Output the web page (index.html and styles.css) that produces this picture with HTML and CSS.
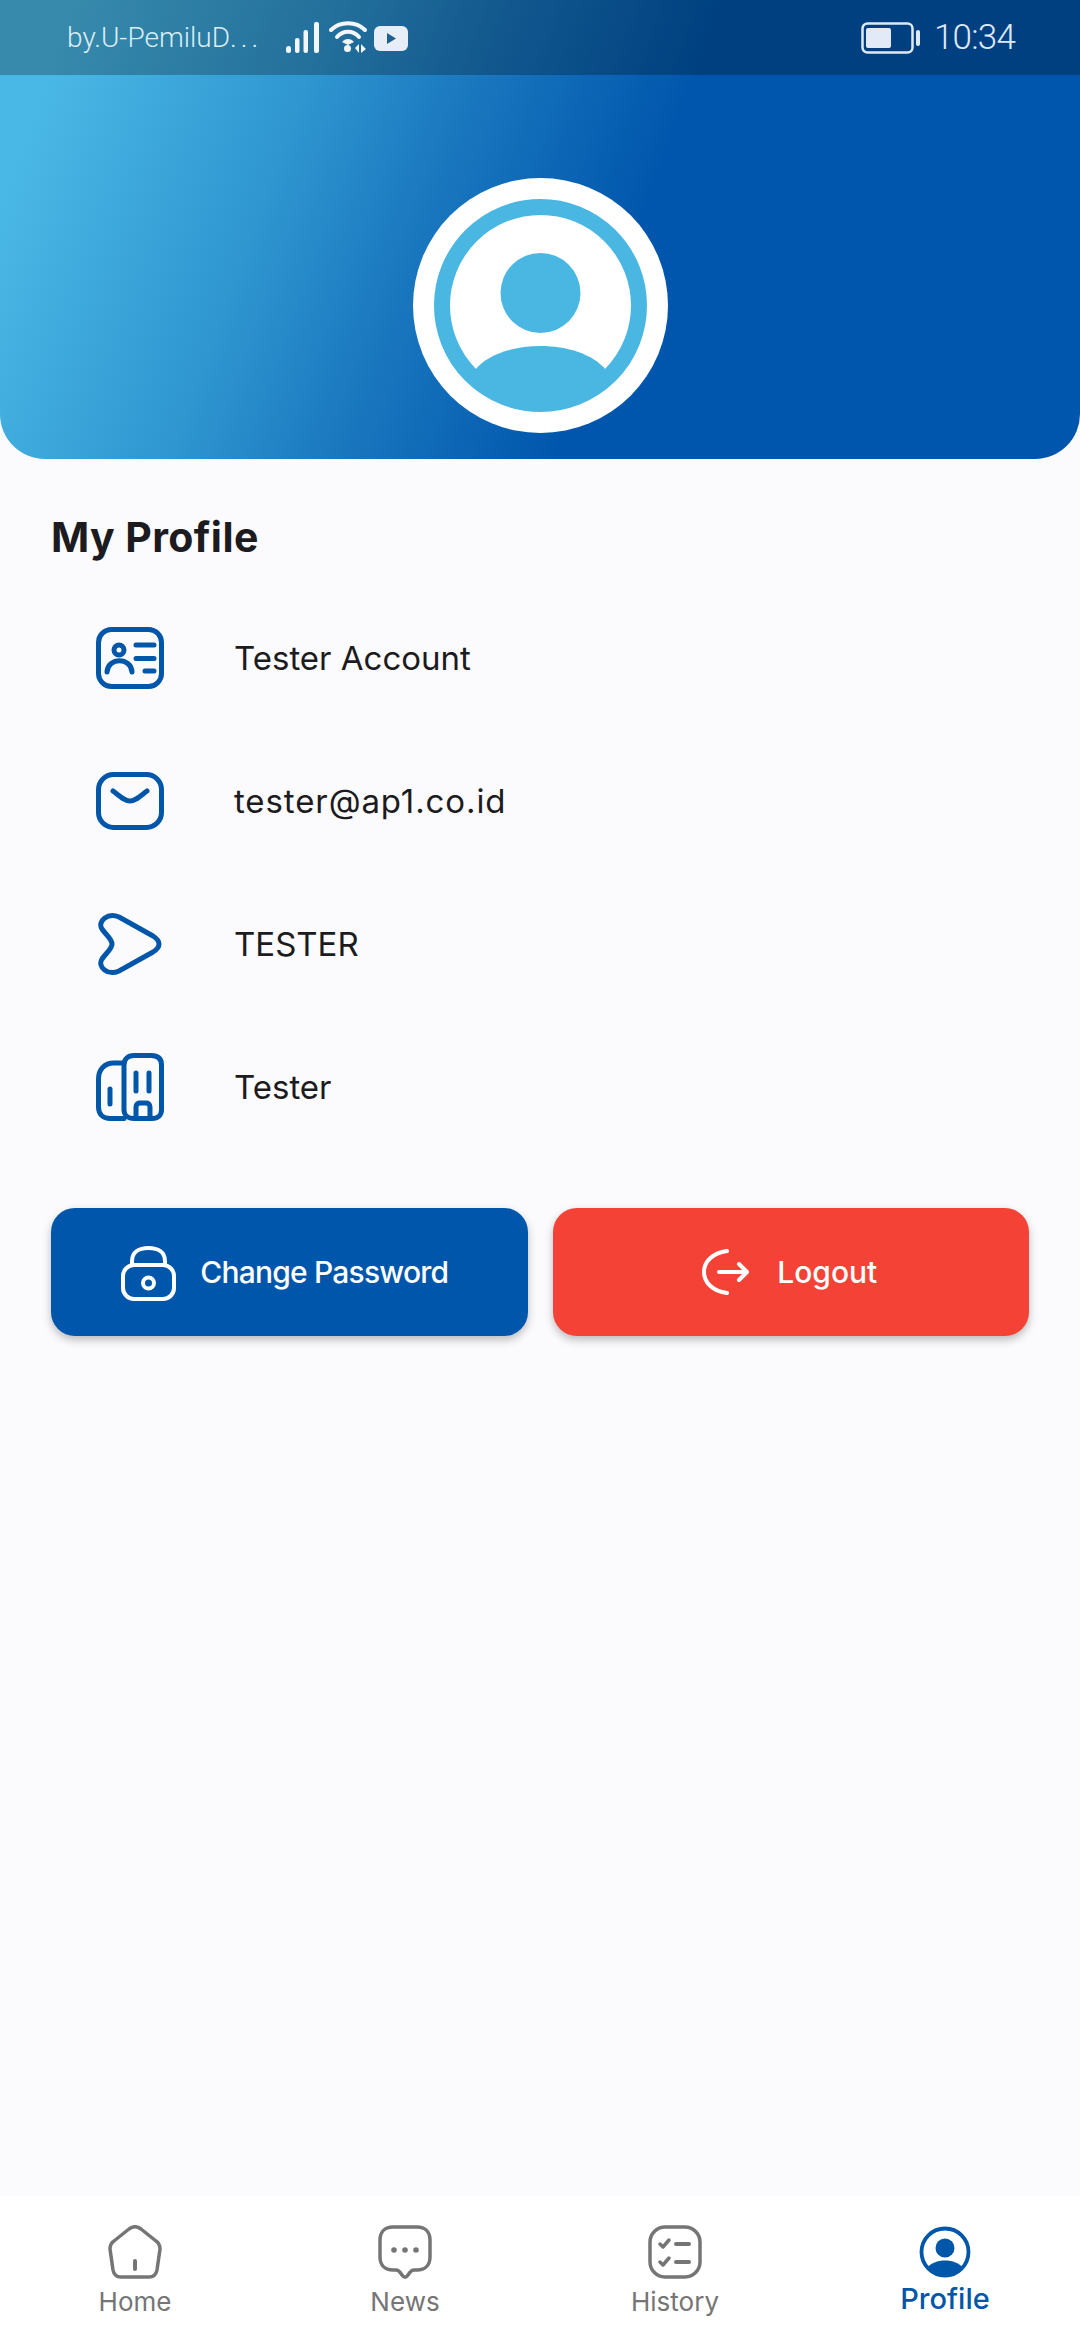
FILE: index.html
```html
<!DOCTYPE html>
<html lang="en">
<head>
<meta charset="utf-8">
<title>My Profile</title>
<link rel="stylesheet" href="styles.css">
</head>
<body>
<div class="app">
  <header class="hero">
    <div class="status">
      <div class="status-left">
        <span class="carrier">by.U-PemiluD<span class="dots">...</span></span>
        <svg class="sig" viewBox="0 0 34 31"><g fill="#f2f6fb"><rect x="0" y="24" width="5" height="7" rx="2.5"/><rect x="9" y="16" width="4.5" height="15" rx="2"/><rect x="17.5" y="8" width="4.5" height="23" rx="2"/><rect x="28" y="0" width="5" height="31" rx="2"/></g></svg>
        <svg class="wifi" viewBox="0 0 38 32"><g fill="none" stroke="#f2f6fb" stroke-width="4" stroke-linecap="round"><path d="M2 9C11 0 27 0 36 9"/><path d="M8 16C14 9 24 9 30 16"/></g><path d="M13 21C16 17 22 17 25 21L19 24Z" fill="#f2f6fb"/><circle cx="18.5" cy="27.5" r="3.5" fill="#f2f6fb"/><path d="M26 27l4-4v9zM32 23l5 5-5 4z" fill="#f2f6fb"/></svg>
        <svg class="yt" viewBox="0 0 34 25"><rect width="34" height="25" rx="6" fill="#e8eef8"/><path d="M13 7l9 5.500-9 5.500z" fill="#1f5f91"/></svg>
      </div>
      <div class="status-right">
        <svg class="batt" viewBox="0 0 60 32"><rect x="1.500" y="1.500" width="50" height="29" rx="5" fill="none" stroke="#dfe9f6" stroke-width="2.500"/><rect x="5" y="6" width="25" height="20" rx="2" fill="#e2eaf7"/><rect x="55" y="8" width="4" height="16" rx="2" fill="#dfe9f6"/></svg>
        <span class="time">10:34</span>
      </div>
    </div>
    <div class="hero-body">
      <svg class="avatar" viewBox="0 0 255 255">
        <circle cx="127.500" cy="127.500" r="127.500" fill="#fff"/>
        <circle cx="127.500" cy="127.500" r="98.500" fill="none" stroke="#4ab7e3" stroke-width="16"/>
        <circle cx="127.500" cy="115" r="40" fill="#4ab7e3"/>
        <path d="M62 192C88 160 167 160 193 192A91 91 0 0 1 62 192Z" fill="#4ab7e3"/>
      </svg>
    </div>
  </header>

  <main class="content">
    <h1 class="title">My Profile</h1>
    <ul class="info">
      <li class="row">
        <svg class="ic ic-id" viewBox="0 0 68 62"><g fill="none" stroke="#0056a8" stroke-width="5" stroke-linecap="round"><rect x="2.500" y="2.500" width="63" height="57" rx="13"/><circle cx="23" cy="23" r="5"/><path d="M11 45C12 30 35 30 36 45"/><path d="M40 18H58M40 31.500H58M49 44H58"/></g></svg>
        <span class="label">Tester Account</span>
      </li>
      <li class="row">
        <svg class="ic ic-mail" viewBox="0 0 68 58"><g fill="none" stroke="#0056a8" stroke-width="5" stroke-linecap="round"><rect x="2.500" y="2.500" width="63" height="53" rx="15"/><path d="M17 19C25 25 29 29 34 29C39 29 43 25 51 19"/></g></svg>
        <span class="label label-wide">tester@ap1.co.id</span>
      </li>
      <li class="row">
        <svg class="ic ic-play" viewBox="0 0 68 64"><path d="M23 5L57 24C65 29 65 35 57 40L23 59C12 64 1 55 6 47C10 41 16 37 16 32C16 27 10 23 6 17C1 9 12 0 23 5Z" fill="none" stroke="#0056a8" stroke-width="5"/></svg>
        <span class="label">TESTER</span>
      </li>
      <li class="row">
        <svg class="ic ic-bld" viewBox="0 0 68 68"><g fill="none" stroke="#0056a8" stroke-width="5" stroke-linecap="round" stroke-linejoin="round"><path d="M28 10H18C8 10 2.500 17 2.500 26V54C2.500 62 8 65.500 14 65.500H28"/><path d="M28 12C28 6 32 2.500 38 2.500H55C62 2.500 65.500 6 65.500 12V57C65.500 62 62 65.500 56 65.500H38C32 65.500 28 62 28 57Z"/><path d="M40 20V38M53 20V38M14 36V51"/><path d="M40 65V54C40 51 42 50 44 50H50C52 50 54 51 54 54V65"/></g></svg>
        <span class="label">Tester</span>
      </li>
    </ul>
    <div class="actions">
      <button class="btn btn-blue">
        <svg class="btn-lock" viewBox="0 0 55 55"><g fill="none" stroke="#fff" stroke-width="4" stroke-linecap="round"><rect x="2" y="19" width="51" height="34" rx="11"/><path d="M11 19V15C11 6 18 2 27.500 2C37 2 44 6 44 15V19"/><circle cx="27.500" cy="37" r="5.500"/></g></svg>
        <span class="btn-text-tight">Change Password</span>
      </button>
      <button class="btn btn-red">
        <svg class="btn-out" viewBox="0 0 48 46"><g fill="none" stroke="#fff" stroke-width="4" stroke-linecap="round" stroke-linejoin="round"><path d="M25 2C10 4 2 13 2 23C2 33 10 42 25 44"/><path d="M17 23H45M37 15L45 23L37 31"/></g></svg>
        <span>Logout</span>
      </button>
    </div>
  </main>

  <nav class="tabs">
    <div class="tab">
      <svg class="tab-ic" viewBox="0 0 54 54"><g fill="none" stroke="#757575" stroke-width="3.500" stroke-linecap="round" stroke-linejoin="round"><path d="M21 4C25 1 29 1 33 4L48 16C51 18 52 21 52 24L49 45C48 50 45 52 41 52H13C9 52 6 50 5 45L2 24C2 21 3 18 6 16Z"/></g><path d="M27 36V44" stroke="#757575" stroke-width="4" stroke-linecap="round"/></svg>
      <span class="tab-label">Home</span>
    </div>
    <div class="tab">
      <svg class="tab-ic" viewBox="0 0 54 54"><path d="M15 2H39C47 2 52 7 52 15V32C52 40 47 45 39 45H36C33 45 32 47 30 50C28 53 26 53 24 50C22 47 21 45 18 45H15C7 45 2 40 2 32V15C2 7 7 2 15 2Z" fill="none" stroke="#757575" stroke-width="3.500"/><g fill="#757575"><circle cx="16" cy="25" r="2.800"/><circle cx="27" cy="25" r="2.800"/><circle cx="38" cy="25" r="2.800"/></g></svg>
      <span class="tab-label">News</span>
    </div>
    <div class="tab">
      <svg class="tab-ic" viewBox="0 0 54 54"><rect x="2" y="2" width="50" height="50" rx="15" fill="none" stroke="#757575" stroke-width="3.500"/><g fill="none" stroke="#757575" stroke-width="3.500" stroke-linecap="round" stroke-linejoin="round"><path d="M12 19L15 22L21 15M12 37L15 40L21 33"/><path d="M28 19H41M28 37H41" stroke-width="4"/></g></svg>
      <span class="tab-label">History</span>
    </div>
    <div class="tab tab-on">
      <svg class="tab-ic" viewBox="0 0 54 54"><circle cx="27" cy="27" r="23.500" fill="none" stroke="#0056a8" stroke-width="3.800"/><circle cx="27" cy="23" r="9.500" fill="#0056a8"/><path d="M9 43C16 33 38 33 45 43A24 24 0 0 1 9 43Z" fill="#0056a8"/></svg>
      <span class="tab-label">Profile</span>
    </div>
  </nav>
</div>
</body>
</html>
```

FILE: styles.css
```css
* { box-sizing: border-box; }
html, body { margin: 0; padding: 0; }
body { font-family: "Inter", "Liberation Sans", sans-serif; background: #fbfafc; }
.app { width: 1080px; height: 2340px; display: flex; flex-direction: column; overflow: hidden; }

.hero {
  height: 459px;
  flex: none;
  display: flex;
  flex-direction: column;
  border-radius: 0 0 45px 45px;
  background: linear-gradient(110deg, #4ab8e6 6%, #2f96d0 27%, #1a78bf 40%, #0056ac 58%);
}
.status {
  height: 75px;
  flex: none;
  padding: 0 65px 0 67px;
  display: flex;
  align-items: center;
  justify-content: space-between;
  background: rgba(0, 0, 0, 0.25);
}
.status-left, .status-right { display: flex; align-items: center; }
.carrier { font-family: "Roboto", sans-serif; font-weight: 300; font-size: 28px; color: #d9eef5; width: 219px; white-space: nowrap; }
.dots { letter-spacing: 4px; }
.sig { width: 34px; height: 31px; margin-top: -1px; }
.wifi { width: 38px; height: 32px; margin-left: 9px; margin-top: -1px; }
.yt { width: 34px; height: 25px; margin-left: 7px; margin-top: 2px; }
.batt { width: 60px; height: 32px; }
.time { font-family: "Roboto", sans-serif; font-weight: 300; font-size: 35px; letter-spacing: -0.8px; color: #dfe9f6; margin-left: 13px; }

.hero-body { flex: 1; display: flex; justify-content: center; padding-top: 103px; }
.avatar { width: 255px; height: 255px; }

.content { flex: 1; padding: 54px 51px 0; }
.title { margin: 0; font-size: 41px; letter-spacing: 0.4px; line-height: 48px; font-weight: 700; color: #1c1b20; }
.info { list-style: none; margin: 25px 0 0; padding: 0; }
.row { height: 143px; display: flex; align-items: center; padding-left: 45px; }
.ic { width: 68px; flex: none; }
.ic-id { height: 62px; }
.ic-mail { height: 58px; }
.ic-play { height: 64px; }
.ic-bld { height: 68px; }
.label { margin-left: 70px; font-size: 33px; color: #1c1b20; }
.label-wide { letter-spacing: 0.9px; }

.actions { display: flex; gap: 25px; margin-top: 50px; }
.btn {
  width: 476.5px;
  flex: none;
  height: 128px;
  border: 0;
  border-radius: 24px;
  display: flex;
  align-items: center;
  justify-content: center;
  color: #fff;
  font-family: inherit;
  font-size: 30px;
  font-weight: 500;
  box-shadow: 0 4px 8px rgba(0, 0, 0, 0.25);
}
.btn-blue { background: #0056ab; padding: 0 9px 0 0; }
.btn-red { background: #f44336; padding: 0 2px 0 0; }
.btn-text-tight { letter-spacing: -0.8px; }
.btn-lock { width: 55px; height: 55px; margin-right: 24px; margin-top: 3px; }
.btn-out { width: 48px; height: 46px; margin-right: 27px; }

.tabs { height: 144px; flex: none; background: #fff; display: grid; grid-template-columns: repeat(4, 270px); }
.tab { display: flex; flex-direction: column; align-items: center; padding-top: 29px; color: #757575; }
.tab-ic { width: 54px; height: 54px; }
.tab-label { font-size: 26px; line-height: 32px; margin-top: 7px; }
.tab-on { color: #0056a8; }
.tab-on .tab-label { font-size: 29px; font-weight: 500; margin-top: 4px; }
```
